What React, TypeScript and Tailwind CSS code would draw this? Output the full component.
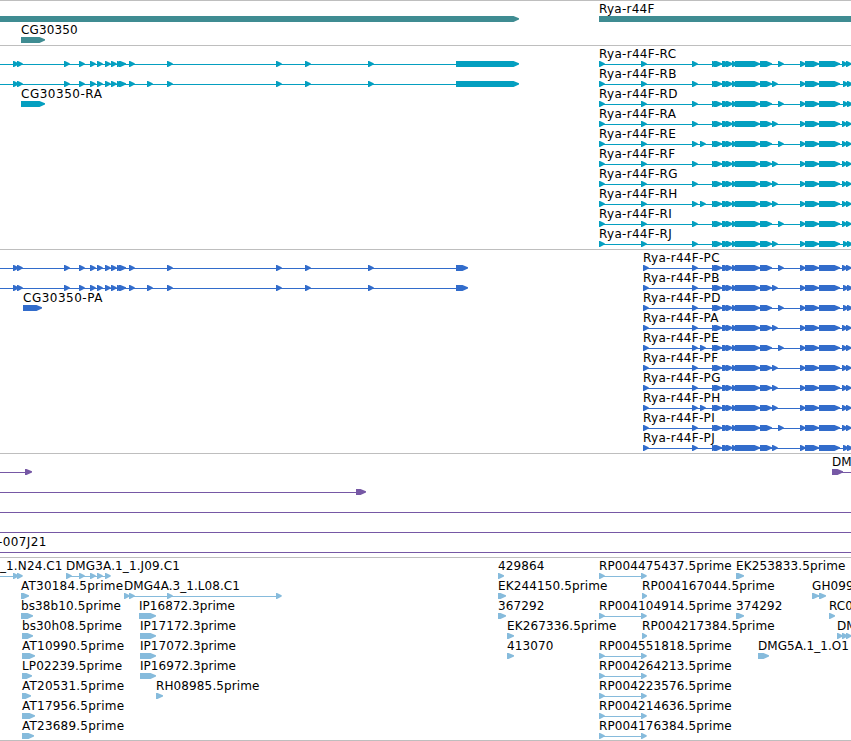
type Feature = {
  label?: string;
  labelX?: number;
  labelClass?: string;
  // start/end of the connecting line
  line?: [number, number];
  // exons as [start, end]
  blocks?: [number, number][];
};

type TrackData = {
  id: string;
  color: string;
  rowClass: string;
  className: string;
  rows: Feature[][];
};

const VIEW_WIDTH = 851;
const ARROW = 5.7;

const arrows = (...starts: number[]) => starts.map((x): [number, number] => [x, x + ARROW]);

const CG_LEFT = arrows(13, 17, 64, 79, 90, 97, 105, 111);
const CG_RIGHT = arrows(167, 276, 305, 368);

function cgRow(extra: boolean, end: number): Feature {
  return {
    line: [0, end - 1],
    blocks: [
      ...CG_LEFT,
      [117, 123],
      [119, 126],
      ...arrows(129),
      ...(extra ? arrows(147) : []),
      ...CG_RIGHT,
      [456, end],
    ],
  };
}

// suffix, has exon at 700, late middle exon, shifted tail
const ISOFORMS: [string, boolean, boolean, boolean][] = [
  ['C', false, true, false],
  ['B', false, false, true],
  ['D', false, true, true],
  ['A', false, false, false],
  ['E', true, true, false],
  ['F', false, false, false],
  ['G', false, false, false],
  ['H', true, false, false],
  ['I', false, true, false],
  ['J', false, false, true],
];

function isoform(kind: 'R' | 'P', [suffix, extra, late, shifted]: (typeof ISOFORMS)[number]): Feature {
  const start = kind === 'R' ? 599 : 643;
  return {
    label: `Rya-r44F-${kind}${suffix}`,
    labelX: start,
    labelClass: 'tracking-[0.3px]',
    line: [start, VIEW_WIDTH],
    blocks: [
      ...(kind === 'R' ? arrows(599, 641) : arrows(643)),
      ...arrows(692),
      ...(extra ? arrows(700) : []),
      [712, 718],
      [714, 722],
      [722, 730],
      [726, 733],
      [732, 737],
      [735, 760],
      [760, 772],
      ...arrows(late ? 778 : 772),
      ...arrows(800),
      [805, 819],
      [819, 840],
      ...(shifted ? arrows(843, 847) : arrows(842, 846)),
    ],
  };
}

const block = (label: string, x: number, end: number, labelClass?: string): Feature => ({
  label,
  labelX: x,
  labelClass,
  blocks: [[x, end]],
});

const rp = (label: string): Feature => ({
  label,
  labelX: 599,
  line: [599, 645],
  blocks: arrows(599, 641),
});

const TRACKS: TrackData[] = [
  {
    id: 'gene',
    color: 'text-[#3f8c92]',
    rowClass: 'h-[21px]',
    className: 'h-[45px]',
    rows: [
      [{ blocks: [[-10, 519]] }, block('Rya-r44F', 599, 900, 'tracking-[0.26px]')],
      [block('CG30350', 21, 45, 'tracking-[0.12px]')],
    ],
  },
  {
    id: 'transcript',
    color: 'text-[#049fc0]',
    rowClass: 'h-5',
    className: 'h-[204px]',
    rows: ISOFORMS.map((iso, i) => [
      ...(i === 0 ? [cgRow(false, 519)] : []),
      ...(i === 1 ? [cgRow(true, 519)] : []),
      ...(i === 2 ? [block('CG30350-RA', 21, 45, 'tracking-[0.52px]')] : []),
      isoform('R', iso),
    ]),
  },
  {
    id: 'cds',
    color: 'text-[#326ccb]',
    rowClass: 'h-5',
    className: 'h-[204px]',
    rows: ISOFORMS.map((iso, i) => [
      ...(i === 0 ? [cgRow(false, 468)] : []),
      ...(i === 1 ? [cgRow(true, 468)] : []),
      ...(i === 2 ? [block('CG30350-PA', 23, 42, 'tracking-[0.5px]')] : []),
      isoform('P', iso),
    ]),
  },
  {
    id: 'clone',
    color: 'text-[#7658a5]',
    rowClass: 'h-5',
    className: 'h-[104px]',
    rows: [
      [
        { line: [0, 31], blocks: [[25, 32]] },
        { label: 'DM', labelX: 832, line: [832, 851], blocks: [[832, 843]] },
      ],
      [{ line: [0, 365], blocks: [[356, 366]] }],
      [{ line: [0, 851] }],
      [{ line: [0, 851] }],
      [{ label: '-007J21', labelX: -2, labelClass: 'tracking-[0.38px]', line: [0, 851] }],
    ],
  },
  {
    id: 'est',
    color: 'text-[#86bbdc]',
    rowClass: 'h-5',
    className: 'h-[184px] border-b',
    rows: [
      [
        { label: '_1.N24.C1', labelX: 0, line: [0, 21], blocks: arrows(13, 17) },
        { label: 'DMG3A.1_1.J09.C1', labelX: 66, line: [66, 109], blocks: arrows(66, 79, 90, 97, 105) },
        block('429864', 498, 504),
        rp('RP004475437.5prime'),
        block('EK253833.5prime', 736, 744),
      ],
      [
        block('AT30184.5prime', 21, 29, 'tracking-[0.22px]'),
        {
          label: 'DMG4A.3_1.L08.C1',
          labelX: 124,
          labelClass: 'tracking-[0.04px]',
          line: [124, 280],
          blocks: arrows(124, 129, 167, 276),
        },
        block('EK244150.5prime', 498, 506),
        block('RP004167044.5prime', 642, 647),
        { label: 'GH09912.5prime', labelX: 812, line: [812, 824], blocks: [[812, 819], [819, 826]] },
      ],
      [
        block('bs38b10.5prime', 21, 33),
        block('IP16872.3prime', 139, 156, 'tracking-[0.04px]'),
        block('367292', 498, 506),
        rp('RP004104914.5prime'),
        block('374292', 736, 744),
        block('RC0', 829, 835),
      ],
      [
        block('bs30h08.5prime', 22, 33),
        block('IP17172.3prime', 140, 156, 'tracking-[0.04px]'),
        block('EK267336.5prime', 507, 514),
        block('RP004217384.5prime', 642, 647),
        { label: 'DM', labelX: 837, blocks: arrows(837, 842, 846) },
      ],
      [
        block('AT10990.5prime', 22, 35, 'tracking-[0.22px]'),
        block('IP17072.3prime', 140, 156, 'tracking-[0.04px]'),
        block('413070', 507, 514),
        rp('RP004551818.5prime'),
        block('DMG5A.1_1.O1', 758, 769, 'tracking-[0.04px]'),
      ],
      [
        block('LP02239.5prime', 22, 32),
        block('IP16972.3prime', 140, 156, 'tracking-[0.04px]'),
        rp('RP004264213.5prime'),
      ],
      [
        block('AT20531.5prime', 22, 31, 'tracking-[0.22px]'),
        block('RH08985.5prime', 156, 163),
        rp('RP004223576.5prime'),
      ],
      [block('AT17956.5prime', 22, 35, 'tracking-[0.22px]'), rp('RP004214636.5prime')],
      [block('AT23689.5prime', 22, 34, 'tracking-[0.22px]'), rp('RP004176384.5prime')],
    ],
  },
];

// Box with a pointed right end
function blockPath([start, end]: [number, number]) {
  const body = Math.max(start + 1, end - 5.5);
  return `M${start} 0H${body}L${end} 2.3V3.5L${body} 6H${start}Z`;
}

function TrackRow({ features, rowClass }: { features: Feature[]; rowClass: string }) {
  return (
    <div className={`relative overflow-hidden pt-[13px] ${rowClass}`}>
      <svg width={VIEW_WIDTH} height="6" className="block" fill="currentColor">
        {features.map((f, i) => (
          <g key={i}>
            {f.line && <rect x={f.line[0]} y="3" width={f.line[1] - f.line[0]} height="1" />}
            {f.blocks?.map((b, j) => <path key={j} d={blockPath(b)} />)}
          </g>
        ))}
      </svg>
      {features.map(
        (f, i) =>
          f.label && (
            <span
              key={i}
              className={`absolute top-[-1px] leading-[14px] whitespace-pre text-black ${f.labelClass ?? 'tracking-[0.12px]'}`}
              style={{ left: f.labelX }}
            >
              {f.label}
            </span>
          ),
      )}
    </div>
  );
}

function Track({ track }: { track: TrackData }) {
  return (
    <section className={`border-t border-[#bebebe] pt-0.5 ${track.className}`}>
      <div className={track.color}>
        {track.rows.map((features, i) => (
          <TrackRow key={i} features={features} rowClass={track.rowClass} />
        ))}
      </div>
    </section>
  );
}

export default function App() {
  return (
    <div className="h-[741px] w-[851px] overflow-hidden bg-white font-['DejaVu_Sans',sans-serif] text-[12px]">
      {TRACKS.map((track) => (
        <Track key={track.id} track={track} />
      ))}
    </div>
  );
}
